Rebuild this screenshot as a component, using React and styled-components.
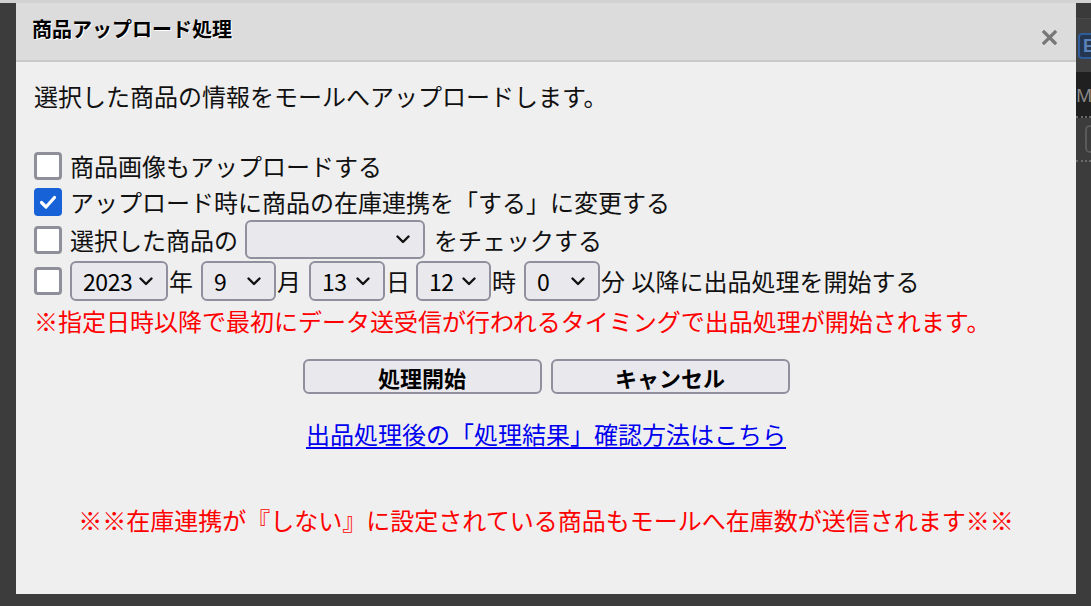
import React from "react";
import styled, { createGlobalStyle } from "styled-components";

const GlobalStyle = createGlobalStyle`
  html, body { margin: 0; padding: 0; }
  body {
    background: #3c3c3c;
    font-family: "Noto Sans CJK JP", "Noto Sans", sans-serif;
  }
  * { box-sizing: border-box; }
`;

const Page = styled.div`
  position: relative;
  width: 1091px;
  height: 606px;
  overflow: hidden;
  background: #3c3c3c;
  display: flex;
  flex-direction: column;
`;

const TopLine = styled.div`
  height: 3px;
  background: #d2d2d2;
  flex: none;
`;

const BgBody = styled.div`
  flex: 1;
  display: flex;
  justify-content: flex-end;
`;

const SidePane = styled.div`
  width: 15px;
  overflow: hidden;
  display: flex;
  flex-direction: column;
`;

const SideTop = styled.div`
  height: 16px;
  background: #3a3a3a;
  border-bottom: 1px solid #4a4a4a;
`;

const SideToolbar = styled.div`
  height: 53px;
  background: #404040;
  display: flex;
  align-items: center;
  padding-left: 2px;
`;

const ToolIcon = styled.div`
  width: 26px;
  height: 26px;
  flex: none;
  border: 2px solid #2f5d9a;
  border-radius: 4px;
  background: #243650;
  color: #5a80b8;
  font: bold 18px/22px "Liberation Sans", sans-serif;
  padding-left: 3px;
`;

const SideNav = styled.div`
  height: 46px;
  background: #202020;
  color: #8a8a8a;
  font: 18px/46px "Noto Sans", sans-serif;
  white-space: nowrap;
  border-bottom: 2px dotted #6a6a6a;
`;

const SideFilter = styled.div`
  height: 44px;
  padding: 7px 0 0 9px;
  border-bottom: 2px dotted #6a6a6a;
`;

const SideInput = styled.div`
  width: 30px;
  height: 28px;
  border: 2px solid #5a5a5a;
  border-radius: 5px;
`;

const Modal = styled.div`
  position: absolute;
  left: 16px;
  top: 3px;
  width: 1060px;
  height: 591px;
  background: #efefef;
  display: flex;
  flex-direction: column;
`;

const Header = styled.div`
  height: 59px;
  flex: none;
  background: #dcdcdc;
  border-bottom: 2px solid #c9c9c9;
  display: flex;
  justify-content: space-between;
  align-items: flex-start;
  padding: 0 19px 0 16px;
`;

const Title = styled.h1`
  margin: 15px 0 0;
  font-size: 20px;
  line-height: 21px;
  font-weight: bold;
  color: #000;
  text-shadow: 1px 1px 0 #fff;
`;

const Close = styled.div`
  margin-top: 27px;
  width: 15px;
  height: 15px;
  display: flex;
`;

const Body = styled.div`
  flex: 1;
  padding: 16px 18px 0;
  color: #111;
  font-size: 24px;
  line-height: 36px;
`;

const Intro = styled.p`
  margin: 0 0 34px;
`;

const Options = styled.div`
  display: flex;
  flex-direction: column;
`;

const Row = styled.div`
  display: flex;
  align-items: center;
  height: ${(p) => p.$h || 36}px;
  margin-top: ${(p) => p.$mt || 0}px;
  white-space: nowrap;
`;

const Box = styled.span`
  width: 28px;
  height: 28px;
  flex: none;
  margin-right: 8px;
  border-radius: 4px;
  display: flex;
  align-items: center;
  justify-content: center;
  background: ${(p) => (p.$checked ? "#1662d6" : "#ffffff")};
  border: ${(p) => (p.$checked ? "none" : "3px solid #8f8f99")};
`;

const SelectBox = styled.div`
  width: ${(p) => p.$w}px;
  height: ${(p) => p.$h || 40}px;
  margin: ${(p) => p.$m || "0"};
  flex: none;
  display: flex;
  align-items: center;
  justify-content: space-between;
  padding: 0 13px 0 11px;
  border: 2px solid #8f8f9d;
  border-radius: 6px;
  background: #e9e9ed;
  color: #000;
  font-size: 23px;
  letter-spacing: -0.4px;
`;

const Unit = styled.span`
  padding: 0 1px;
  margin-right: ${(p) => p.$mr ?? 7}px;
`;

const Notice = styled.p`
  margin: 0;
  color: #ff0000;
  font-size: 24px;
  line-height: 36px;
  text-align: ${(p) => (p.$center ? "center" : "left")};
  margin-top: ${(p) => p.$mt || 0}px;
  white-space: nowrap;
`;

const Buttons = styled.div`
  display: flex;
  justify-content: center;
  gap: 9px;
  margin-top: 20px;
`;

const Button = styled.button`
  width: 239px;
  height: 35px;
  border: 2px solid #8f8f9d;
  border-radius: 6px;
  background: #e9e9ed;
  color: #000;
  font-family: "Noto Sans CJK JP", sans-serif;
  font-size: 22px;
  font-weight: bold;
  line-height: 28px;
  padding: 0;
  cursor: pointer;
`;

const LinkLine = styled.div`
  margin-top: 22px;
  text-align: center;
`;

const Link = styled.a`
  color: #0000ee;
  text-decoration: underline;
  text-underline-offset: 3px;
  cursor: pointer;
`;

const Check = () => (
  <svg width="20" height="20" viewBox="0 0 20 20">
    <path d="M3.5 10.5 L8 15 L16.5 5.5" fill="none" stroke="#fff" strokeWidth="3.2" strokeLinecap="round" strokeLinejoin="round" />
  </svg>
);

const Chevron = () => (
  <svg width="14" height="9" viewBox="0 0 14 9">
    <path d="M1.5 1.5 L7 7 L12.5 1.5" fill="none" stroke="#111" strokeWidth="2.4" strokeLinecap="round" strokeLinejoin="round" />
  </svg>
);

const Checkbox = ({ checked }) => <Box $checked={checked}>{checked && <Check />}</Box>;

const Select = ({ value, w, h, m }) => (
  <SelectBox $w={w} $h={h} $m={m}>
    <span>{value}</span>
    <Chevron />
  </SelectBox>
);

export default function App() {
  return (
    <>
      <GlobalStyle />
      <Page>
        <TopLine />
        <BgBody>
          <SidePane>
            <SideTop />
            <SideToolbar>
              <ToolIcon>E</ToolIcon>
            </SideToolbar>
            <SideNav>Main</SideNav>
            <SideFilter>
              <SideInput />
            </SideFilter>
          </SidePane>
        </BgBody>
        <Modal>
          <Header>
            <Title>商品アップロード処理</Title>
            <Close>
              <svg width="15" height="15" viewBox="0 0 15 15">
                <path d="M2 2 L13 13 M13 2 L2 13" stroke="#777" strokeWidth="3.2" strokeLinecap="square" />
              </svg>
            </Close>
          </Header>
          <Body>
            <Intro>選択した商品の情報をモールへアップロードします。</Intro>
            <Options>
              <Row>
                <Checkbox />
                商品画像もアップロードする
              </Row>
              <Row>
                <Checkbox checked />
                アップロード時に商品の在庫連携を「する」に変更する
              </Row>
              <Row $h={39}>
                <Checkbox />
                選択した商品の
                <Select value="" w={180} h={39} m="0 9px 0 7px" />
                をチェックする
              </Row>
              <Row $h={40} $mt={2}>
                <Checkbox />
                <Select value="2023" w={98} />
                <Unit>年</Unit>
                <Select value="9" w={75} />
                <Unit>月</Unit>
                <Select value="13" w={76} />
                <Unit $mr={5}>日</Unit>
                <Select value="12" w={75} />
                <Unit>時</Unit>
                <Select value="0" w={76} />
                <Unit $mr={0}>分</Unit>&nbsp;以降に出品処理を開始する
              </Row>
            </Options>
            <Notice $mt={2}>※指定日時以降で最初にデータ送受信が行われるタイミングで出品処理が開始されます。</Notice>
            <Buttons>
              <Button>処理開始</Button>
              <Button>キャンセル</Button>
            </Buttons>
            <LinkLine>
              <Link>出品処理後の「処理結果」確認方法はこちら</Link>
            </LinkLine>
            <Notice $center $mt={50}>
              ※※在庫連携が『しない』に設定されている商品もモールへ在庫数が送信されます※※
            </Notice>
          </Body>
        </Modal>
      </Page>
    </>
  );
}
